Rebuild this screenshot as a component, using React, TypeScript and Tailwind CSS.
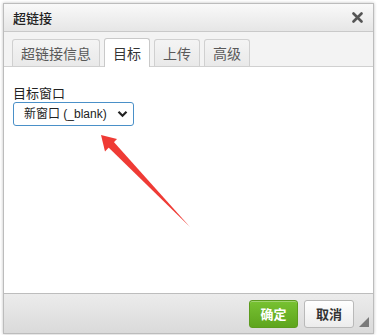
import React from "react";

const tabs = ["超链接信息", "目标", "上传", "高级"];

export default function App() {
  return (
    <div
      className="w-[377px] h-[335px] bg-white pt-[3px] pl-[3px]"
      style={{ fontFamily: '"Noto Sans CJK SC", "Noto Sans", sans-serif' }}
    >
      <div className="relative w-[371px] h-[331px] border border-[#bcbcbc] flex flex-col shadow-[0_0_3px_rgba(0,0,0,0.25)] bg-[#f3f3f3]">
        {/* title */}
        <div className="h-[28px] flex items-center justify-between pl-[9px] pr-[10px] bg-gradient-to-b from-[#f9f9f9] to-[#e6e6e6] border-b border-[#c9c9c9]">
          <span className="text-[13px] text-[#222] leading-none font-medium">超链接</span>
          <svg width="11" height="11" viewBox="0 0 11 11">
            <path d="M1.5 1.5 L9.5 9.5 M9.5 1.5 L1.5 9.5" stroke="#555" strokeWidth="2.6" strokeLinecap="round" />
          </svg>
        </div>

        {/* tabs */}
        <div className="h-[34px] flex items-end gap-[4px] pl-[8px] bg-[#f3f3f3]">
          {tabs.map((t) => {
            const active = t === "目标";
            return (
              <div
                key={t}
                className={
                  active
                    ? "h-[29px] px-[8px] flex items-center border border-b-0 border-[#c9c9c9] rounded-t-[3px] bg-white text-[14px] text-[#333] -mb-px relative z-10"
                    : "h-[27px] px-[8px] flex items-center border border-b-0 border-[#d0d0d0] rounded-t-[3px] bg-gradient-to-b from-[#f4f4f4] to-[#e9e9e9] text-[14px] text-[#595959]"
                }
              >
                {t}
              </div>
            );
          })}
        </div>

        {/* body */}
        <div className="relative flex-1 bg-white border-t border-[#d0d0d0] px-[9px] pt-[18px]">
          <div className="text-[13px] text-[#222] leading-[16px]">目标窗口</div>
          <div className="mt-[1px] w-[121px] h-[24px] border border-[#4a90c8] rounded-[3px] flex items-center justify-between pl-[10px] pr-[5px] bg-white">
            <span
              className="text-[12px] text-[#222]"
              style={{ fontFamily: '"Liberation Sans", "Noto Sans CJK SC", sans-serif' }}
            >
              新窗口 (_blank)
            </span>
            <svg width="11" height="8" viewBox="0 0 11 8">
              <path d="M1.5 1.8 L5.5 5.8 L9.5 1.8" stroke="#222" strokeWidth="2.2" fill="none" />
            </svg>
          </div>

          {/* red arrow annotation */}
          <svg className="absolute left-0 top-0" width="369" height="226" viewBox="0 0 369 226">
            <path d="M102.5 78.5 L108.5 73.5 L186 160 Z" fill="#ef3b35" />
            <path d="M97 68 L113 72 L101 84.5 Z" fill="#ef3b35" />
          </svg>
        </div>

        {/* footer */}
        <div className="h-[40px] border-t border-[#bdbdbd] bg-gradient-to-b from-[#ececec] to-[#dadada] flex items-center justify-end gap-[6px] pr-[19px]">
          <button className="w-[49px] h-[28px] rounded-[3px] border border-[#5c9b1e] bg-gradient-to-b from-[#78c232] to-[#5ea51d] text-white text-[13px] font-bold shadow-[inset_0_1px_0_rgba(255,255,255,0.3)]">
            确定
          </button>
          <button className="w-[50px] h-[28px] rounded-[3px] border border-[#b9b9b9] bg-gradient-to-b from-white to-[#ececec] text-[#333] text-[13px] font-bold">
            取消
          </button>
          <svg className="absolute right-[4px] bottom-[6px]" width="10" height="10" viewBox="0 0 10 10">
            <path d="M10 0 L10 10 L0 10 Z" fill="#7a7a7a" />
          </svg>
        </div>
      </div>
    </div>
  );
}
